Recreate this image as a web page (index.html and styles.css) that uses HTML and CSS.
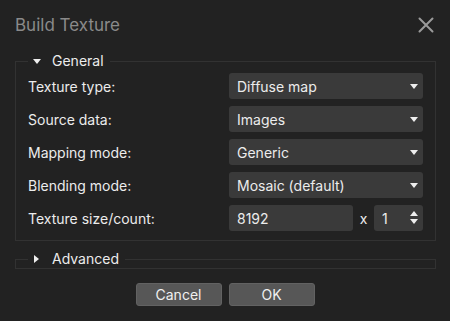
FILE: index.html
```html
<!DOCTYPE html>
<html lang="en">
<head>
  <meta charset="UTF-8" />
  <title>Build Texture</title>
  <link rel="stylesheet" href="styles.css">
</head>
<body>
  <div class="dialog">
    <div class="titlebar">
      <span class="title">Build Texture</span>
      <svg class="close" width="16" height="16" viewBox="0 0 16 16">
        <path d="M1.5 1.5 L14.5 14.5 M14.5 1.5 L1.5 14.5" stroke="#9a9a9a" stroke-width="2" stroke-linecap="round" fill="none"/>
      </svg>
    </div>

    <fieldset class="group">
      <legend><span class="arrow down"></span>General</legend>

      <div class="row">
        <label>Texture type:</label>
        <div class="select">Diffuse map<span class="caret"></span></div>
      </div>
      <div class="row">
        <label>Source data:</label>
        <div class="select">Images<span class="caret"></span></div>
      </div>
      <div class="row">
        <label>Mapping mode:</label>
        <div class="select">Generic<span class="caret"></span></div>
      </div>
      <div class="row">
        <label>Blending mode:</label>
        <div class="select">Mosaic (default)<span class="caret"></span></div>
      </div>
      <div class="row">
        <label>Texture size/count:</label>
        <div class="size">
          <div class="field wide">8192</div>
          <span class="times">x</span>
          <div class="field spin">1
            <span class="spinner"><span class="up"></span><span class="down"></span></span>
          </div>
        </div>
      </div>
    </fieldset>

    <fieldset class="group collapsed">
      <legend><span class="arrow right"></span>Advanced</legend>
    </fieldset>

    <div class="buttons">
      <button>Cancel</button>
      <button>OK</button>
    </div>
  </div>
</body>
</html>
```

FILE: styles.css
```css
body {
  margin: 0;
  background: #222;
  font-family: Inter, 'Liberation Sans', sans-serif;
  color: #ececec;
}

.dialog {
  width: 450px;
  height: 321px;
  box-sizing: border-box;
  padding: 0 14px 0 15px;
}

.titlebar {
  height: 52px;
  display: flex;
  align-items: center;
  justify-content: space-between;
  padding-right: 2px;
}

.title {
  font-size: 17px;
  color: #8a8a8a;
  margin-top: -2px;
}

.close {
  margin-top: -2px;
}

.group {
  margin: 0;
  border: 1px solid #323232;
  padding: 3px 12px 9px 12px;
  display: flex;
  flex-direction: column;
  gap: 7px;
}

.group legend {
  margin-left: 0;
  padding: 0 6px 0 5px;
  font-size: 14px;
  line-height: 18px;
  display: flex;
  align-items: center;
}

.arrow {
  width: 0;
  height: 0;
  margin-right: 11px;
}

.arrow.down {
  border-left: 4px solid transparent;
  border-right: 4px solid transparent;
  border-top: 5px solid #eee;
}

.arrow.right {
  border-top: 4px solid transparent;
  border-bottom: 4px solid transparent;
  border-left: 5px solid #eee;
  margin-left: 1px;
  margin-right: 13px;
}

.group.collapsed {
  margin-top: 9px;
  padding: 0 12px;
}

.row {
  display: flex;
  align-items: center;
  justify-content: space-between;
  height: 26px;
  font-size: 14px;
}

.select, .field {
  background: #3a3a3a;
  border-radius: 3px;
  height: 26px;
  box-sizing: border-box;
  padding-left: 8px;
  display: flex;
  align-items: center;
  position: relative;
}

.select {
  width: 194px;
}

.caret {
  position: absolute;
  right: 5px;
  top: 11px;
  border-left: 4px solid transparent;
  border-right: 4px solid transparent;
  border-top: 5px solid #eee;
}

.size {
  display: flex;
  align-items: center;
  width: 194px;
}

.field.wide {
  width: 124px;
}

.times {
  width: 21px;
  text-align: center;
}

.field.spin {
  width: 49px;
}

.spinner {
  position: absolute;
  right: 5px;
  top: 6px;
  display: flex;
  flex-direction: column;
  gap: 3px;
}

.spinner .up {
  border-left: 4px solid transparent;
  border-right: 4px solid transparent;
  border-bottom: 5px solid #eee;
}

.spinner .down {
  border-left: 4px solid transparent;
  border-right: 4px solid transparent;
  border-top: 5px solid #eee;
}

.buttons {
  display: flex;
  justify-content: center;
  gap: 7px;
  margin-top: 14px;
  padding-right: 1px;
}

button {
  width: 86px;
  height: 23px;
  background: #575757;
  border: 1px solid #626262;
  border-radius: 3px;
  color: #f0f0f0;
  font-family: Inter, 'Liberation Sans', sans-serif;
  font-size: 14px;
  padding: 0;
}
```
